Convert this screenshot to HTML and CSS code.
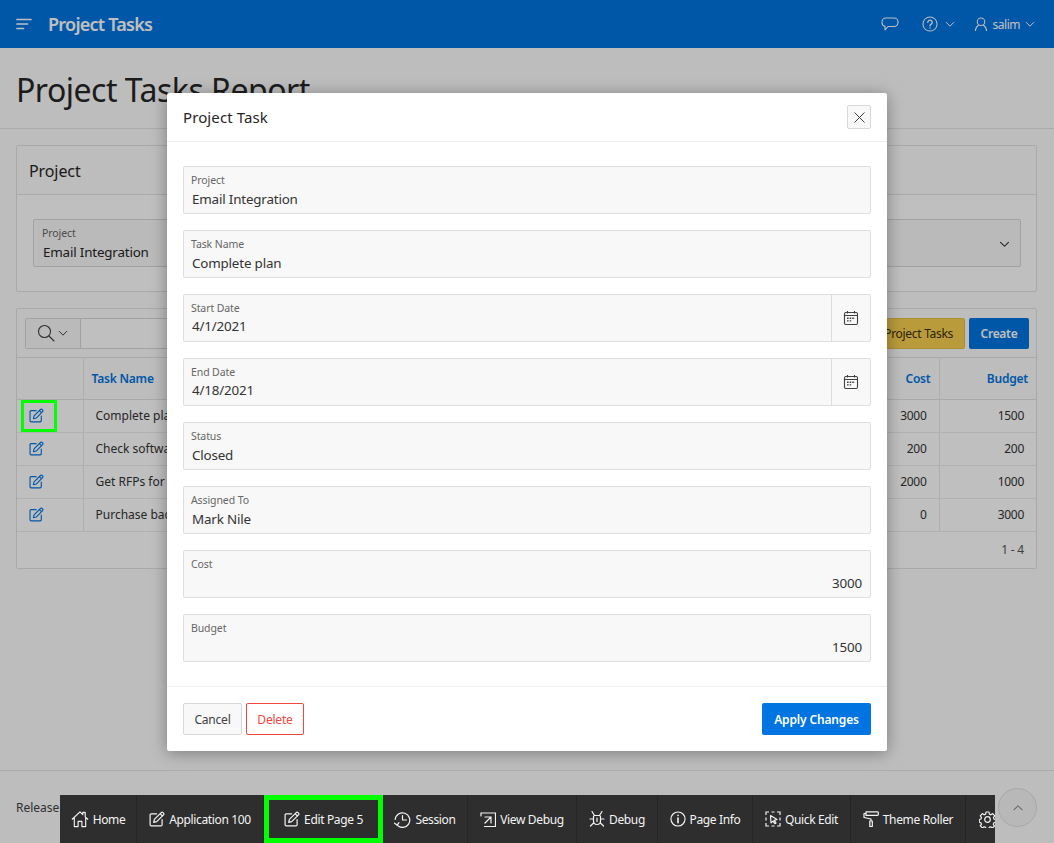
FILE: index.html
```html
<!DOCTYPE html>
<html lang="en">
<head>
  <meta charset="UTF-8" />
  <meta name="viewport" content="width=device-width, initial-scale=1.0" />
  <title>Project Tasks</title>
  <link rel="stylesheet" href="styles.css">
</head>
<body>
  <svg class="sprites" width="0" height="0" aria-hidden="true">
    <symbol id="i-edit" viewBox="0 0 16 16" fill="none" stroke="currentColor" stroke-width="1.2" stroke-linejoin="round" stroke-linecap="round">
      <path d="M7.6 2.8H2.2a1.1 1.1 0 0 0-1.1 1.1v9.8a1.1 1.1 0 0 0 1.1 1.1H12a1.1 1.1 0 0 0 1.1-1.1V8.6"/>
      <path d="M5.4 8.4 12.2 1.6a1.3 1.3 0 0 1 1.8 0l.5.5a1.3 1.3 0 0 1 0 1.8L7.7 10.7l-3 .7zM11.1 2.7l2.3 2.3"/>
    </symbol>
    <symbol id="i-cal" viewBox="0 0 16 16" fill="none" stroke="currentColor" stroke-width="1.1">
      <rect x="1.5" y="2.5" width="13" height="12" rx="1.4"/>
      <path d="M1.5 5.5h13M4.5 1v2.6M11.5 1v2.6"/>
      <path stroke-width="1.4" stroke-dasharray="1.6 1" d="M4 8.2h8M4 10.9h5.2"/>
    </symbol>
    <symbol id="i-chev" viewBox="0 0 12 8" fill="none" stroke="currentColor" stroke-width="1.2" stroke-linecap="round" stroke-linejoin="round">
      <path d="M1.5 1.5 6 6l4.500-4.500"/>
    </symbol>
  </svg>

  <div class="page">
    <header class="topbar">
      <svg class="menu-icon" width="16" height="12" viewBox="0 0 16 12" fill="none" stroke="currentColor" stroke-width="1.7" stroke-linecap="round">
        <path d="M1 1.500h14M1 6h10.500M1 10.500h6.500"/>
      </svg>
      <span class="app-name">Project Tasks</span>
      <div class="topbar-right">
        <svg class="chat-icon" width="18" height="16" viewBox="0 0 18 16" fill="none" stroke="currentColor" stroke-width="1.1" stroke-linejoin="round">
          <path d="M5 1h8a4 4 0 0 1 4 4v.5a4 4 0 0 1-4 4H7l-3 3.500v-3.600A4 4 0 0 1 1 5.500V5a4 4 0 0 1 4-4z"/>
        </svg>
        <span class="help">
          <svg width="16" height="16" viewBox="0 0 17 17" fill="none" stroke="currentColor" stroke-width="1.1" stroke-linecap="round">
            <circle cx="8.500" cy="8.500" r="7.500"/>
            <path stroke-width="1.400" d="M6.200 6.700a2.300 2.300 0 1 1 3.600 1.900c-.8.500-1.300 1-1.300 1.900"/>
            <path stroke-width="1.500" d="M8.500 12.700v.1"/>
          </svg>
          <svg class="chev" width="10" height="7"><use href="#i-chev"/></svg>
        </span>
        <span class="user">
          <svg width="14" height="15" viewBox="0 0 14 16" fill="none" stroke="currentColor" stroke-width="1.1">
            <circle cx="7" cy="5" r="4"/>
            <path d="M1 15c0-3 1.500-5 3.500-6.500M13 15c0-3-1.500-5-3.500-6.500"/>
          </svg>
          <span>salim</span>
          <svg class="chev" width="10" height="7"><use href="#i-chev"/></svg>
        </span>
      </div>
    </header>

    <div class="hero">
      <h1>Project Tasks Report</h1>
    </div>

    <main class="content">
      <section class="card">
        <div class="card-head">Project</div>
        <div class="card-body">
          <div class="select-field">
            <div>
              <div class="select-label">Project</div>
              <div class="select-value">Email Integration</div>
            </div>
            <svg class="select-chev" width="11" height="7"><use href="#i-chev"/></svg>
          </div>
        </div>
      </section>

      <section class="card report">
        <div class="report-bar">
          <div class="search">
            <span class="search-btn">
              <svg width="18" height="18" viewBox="0 0 18 18" fill="none" stroke="currentColor" stroke-width="1.100" stroke-linecap="round">
                <circle cx="7.500" cy="7.500" r="6"/>
                <path d="m12 12 5 5"/>
              </svg>
              <svg class="chev" width="10" height="7"><use href="#i-chev"/></svg>
            </span>
          </div>
          <span class="btn-yellow">Add Project Tasks</span>
          <span class="btn-blue">Create</span>
        </div>
        <table class="tasks">
          <thead>
            <tr>
              <th class="col-link"></th>
              <th class="col-name">Task Name</th>
              <th class="num col-cost">Cost</th>
              <th class="num col-budget">Budget</th>
            </tr>
          </thead>
          <tbody>
            <tr>
              <td class="link-cell"><svg class="edit-link" width="15" height="15"><use href="#i-edit"/></svg></td>
              <td>Complete plan</td><td class="num">3000</td><td class="num">1500</td>
            </tr>
            <tr>
              <td class="link-cell"><svg class="edit-link" width="15" height="15"><use href="#i-edit"/></svg></td>
              <td>Check software</td><td class="num">200</td><td class="num">200</td>
            </tr>
            <tr>
              <td class="link-cell"><svg class="edit-link" width="15" height="15"><use href="#i-edit"/></svg></td>
              <td>Get RFPs for new</td><td class="num">2000</td><td class="num">1000</td>
            </tr>
            <tr>
              <td class="link-cell"><svg class="edit-link" width="15" height="15"><use href="#i-edit"/></svg></td>
              <td>Purchase backup</td><td class="num">0</td><td class="num">3000</td>
            </tr>
          </tbody>
        </table>
        <div class="pager">1 - 4</div>
      </section>
    </main>

    <footer class="foot">Release 1.0</footer>
  </div>

  <button class="to-top" aria-label="Top">
    <svg width="12" height="7"><use href="#i-chev" transform="rotate(180 6 3.500)"/></svg>
  </button>

  <div class="overlay"></div>
  <div class="hl"></div>

  <div class="dialog">
    <div class="dialog-head">
      <span>Project Task</span>
      <span class="close">
        <svg width="11" height="11" viewBox="0 0 11 11" stroke="currentColor" stroke-width="1"><path d="m.5.500 10 10M10.500.500l-10 10"/></svg>
      </span>
    </div>
    <div class="dialog-body">
      <div class="field"><label>Project</label><div class="val">Email Integration</div></div>
      <div class="field"><label>Task Name</label><div class="val">Complete plan</div></div>
      <div class="field has-cal">
        <div class="field-main"><label>Start Date</label><div class="val">4/1/2021</div></div>
        <span class="cal"><svg width="16" height="16"><use href="#i-cal"/></svg></span>
      </div>
      <div class="field has-cal">
        <div class="field-main"><label>End Date</label><div class="val">4/18/2021</div></div>
        <span class="cal"><svg width="16" height="16"><use href="#i-cal"/></svg></span>
      </div>
      <div class="field"><label>Status</label><div class="val">Closed</div></div>
      <div class="field"><label>Assigned To</label><div class="val">Mark Nile</div></div>
      <div class="field"><label>Cost</label><div class="val right">3000</div></div>
      <div class="field"><label>Budget</label><div class="val right">1500</div></div>
    </div>
    <div class="dialog-foot">
      <span class="btn btn-cancel">Cancel</span>
      <span class="btn btn-delete">Delete</span>
      <span class="btn btn-apply">Apply Changes</span>
    </div>
  </div>

  <nav class="devbar">
    <a class="w-home">
      <svg width="18" height="18" viewBox="0 0 19 18" fill="none" stroke="currentColor" stroke-width="1.200" stroke-linejoin="round">
        <path d="M1 9.500 9.500 1.500l3 2.800V2h2.500v4.700l3 2.800M3.500 7.500V17h4v-5.500h4V17h4V7.500"/>
      </svg>
      Home
    </a>
    <a class="w-app"><svg width="16" height="16"><use href="#i-edit"/></svg>Application 100</a>
    <a class="w-edit"><svg width="16" height="16"><use href="#i-edit"/></svg>Edit Page 5</a>
    <a class="w-session">
      <svg width="17" height="17" viewBox="0 0 17 17" fill="none" stroke="currentColor" stroke-width="1.200" stroke-linecap="round" stroke-linejoin="round">
        <path d="M3.200 14.200A7.300 7.300 0 1 0 1.200 8.500M8.500 4.500v4.500H12.500M.6 12.200l2.600 2 1.700-2.500"/>
      </svg>
      Session
    </a>
    <a class="w-view">
      <svg width="16" height="15" viewBox="0 0 16 15" fill="none" stroke="currentColor" stroke-width="1.200" stroke-linecap="round">
        <path d="M1 4V1h14.500v13.500H4.500M5 5h6v6M11 5l-6 6"/>
      </svg>
      View Debug
    </a>
    <a class="w-debug">
      <svg width="16" height="16" viewBox="0 0 16 16" fill="none" stroke="currentColor" stroke-width="1.200" stroke-linecap="round">
        <path d="M5.500 4.500h5a1 1 0 0 1 1 1V10a3.500 3.500 0 0 1-7 0V5.500a1 1 0 0 1 1-1zM3 .5l2.500 4M13 .5l-2.500 4M1 8h3.500M11.500 8H15M1.500 15l3-3M14.500 15l-3-3M8 7v3.500"/>
      </svg>
      Debug
    </a>
    <a class="w-info">
      <svg width="16" height="16" viewBox="0 0 17 17" fill="none" stroke="currentColor" stroke-width="1.200" stroke-linecap="round">
        <circle cx="8.500" cy="8.500" r="7.500"/>
        <path stroke-width="1.700" d="M8.500 7.500V12.500M8.500 4.700v.1"/>
      </svg>
      Page Info
    </a>
    <a class="w-quick">
      <svg width="16" height="16" viewBox="0 0 16 16" fill="none" stroke="currentColor" stroke-width="1.200">
        <path d="M1 4V1h3M6.500 1h3M12 1h3v3M15 6.500v3M15 12v3h-3M9.500 15h-3M4 15H1v-3M1 9.500v-3"/>
        <path stroke-linejoin="round" d="M5.500 4.500 12 8.500l-2.800.8 1.800 2.600-1.200.8-1.800-2.600-2 1.800z"/>
      </svg>
      Quick Edit
    </a>
    <a class="w-theme">
      <svg width="16" height="16" viewBox="0 0 16 16" fill="none" stroke="currentColor" stroke-width="1.200" stroke-linejoin="round">
        <path d="M3 .8h11.500a.8.800 0 0 1 .8.800v2a.8.800 0 0 1-.8.800H3zM3 2.500H1v4l7 1.500v2M6.800 10h2.500v5.500H6.800z"/>
      </svg>
      Theme Roller
    </a>
    <a class="w-gear">
      <svg width="17" height="17" viewBox="0 0 17 17" fill="none" stroke="currentColor" stroke-width="1.200" stroke-linejoin="round">
        <circle cx="8.500" cy="8.500" r="2.800"/>
        <path d="M7 1h3l.4 2.100 1.500.7L13.700 2.600l2 2.200-1.300 1.700.5 1.500 1.600.5v2.800l-1.600.5-.6 1.500 1.200 1.700-2.100 2-1.700-1.200-1.500.6-.4 1.500H7l-.4-1.600-1.500-.6-1.700 1.200-2.100-2 1.200-1.700-.6-1.500-1.600-.5V8.500l1.600-.5.600-1.500L1.300 4.800l2-2.200 1.800 1.200 1.500-.7z"/>
      </svg>
    </a>
  </nav>
</body>
</html>
```

FILE: styles.css
```css
* { box-sizing: border-box; }
html, body { height: 100%; }
body {
  margin: 0;
  overflow: hidden;
  font-family: "Noto Sans", "Open Sans", sans-serif;
  font-size: 13px;
  color: #262626;
  background-color: #fcfcfc;
}
.sprites { position: absolute; }
.page {
  height: 843px;
  display: flex;
  flex-direction: column;
}

/* top bar */
.topbar {
  height: 48px;
  flex: none;
  display: flex;
  align-items: center;
  padding: 0 19px 0 16px;
  background-color: #0074e0;
  color: #fff;
}
.app-name {
  margin-left: 16px;
  font-size: 18px;
  font-weight: 600;
  letter-spacing: -0.75px;
}
.topbar-right {
  margin-left: auto;
  display: flex;
  align-items: center;
  font-size: 12px;
}
.chat-icon { margin: 2px 23px 0 0; }
.help, .user { display: flex; align-items: center; }
.help { margin-right: 19px; }
.help .chev { margin-left: 7px; }
.user span { margin: 0 5px; letter-spacing: -0.5px; }

/* page title */
.hero {
  height: 81px;
  flex: none;
  padding: 0 16px;
  display: flex;
  align-items: center;
  border-bottom: 1px solid #e4e4e4;
}
h1 {
  margin: 3px 0 0;
  font-size: 32px;
  font-weight: 400;
  letter-spacing: -0.5px;
}

/* regions */
.content {
  flex: 1;
  padding: 16px 17px 0 16px;
  display: flex;
  flex-direction: column;
  gap: 16px;
}
.card {
  border: 1px solid #e2e2e2;
  border-radius: 2px;
  background-color: #fff;
}
.card-head {
  height: 49px;
  display: flex;
  align-items: center;
  padding: 1px 12px 0;
  font-size: 16px;
  letter-spacing: -0.1px;
  border-bottom: 1px solid #e2e2e2;
  background-color: #fcfcfc;
}
.card-body { padding: 24px 15px 24px 16px; }
.select-field {
  height: 48px;
  display: flex;
  align-items: center;
  justify-content: space-between;
  padding: 2px 10px 0 9px;
  border: 1px solid #d8d8d8;
  border-radius: 2px;
  background-color: #f8f8f8;
}
.select-label {
  margin-left: -1px;
  font-size: 10.5px;
  letter-spacing: -0.1px;
  color: #666;
  line-height: 14px;
}
.select-value {
  margin-top: 2px;
  font-size: 13.4px;
  letter-spacing: -0.18px;
  line-height: 20px;
}

/* report */
.report-bar {
  height: 49px;
  display: flex;
  align-items: center;
  gap: 4px;
  padding: 0 7px 0 8px;
  background-color: #fcfcfc;
  border-bottom: 1px solid #e2e2e2;
}
.search {
  flex: 1;
  height: 31px;
  border: 1px solid #d8d8d8;
  border-radius: 2px;
  background-color: #fff;
}
.search-btn {
  width: 55px;
  height: 100%;
  display: flex;
  align-items: center;
  gap: 3px;
  padding-left: 11px;
  border-right: 1px solid #d8d8d8;
  background-color: #f8f8f8;
  color: #404040;
}
.btn-yellow, .btn-blue {
  height: 31px;
  display: flex;
  align-items: center;
  padding: 0 11px;
  border-radius: 2px;
  font-size: 12px;
  letter-spacing: -0.3px;
}
.btn-yellow {
  background-color: #f8cf50;
  border: 1px solid #e6be45;
  color: #3a3000;
}
.btn-blue {
  width: 60px;
  justify-content: center;
  background-color: #0074e0;
  color: #fff;
  font-weight: 600;
}
.tasks {
  width: 100%;
  border-collapse: collapse;
  table-layout: fixed;
  font-size: 12px;
}
.tasks th {
  height: 41px;
  padding: 0 8px;
  text-align: left;
  color: #0074e0;
  font-weight: 600;
  letter-spacing: -0.2px;
  border-bottom: 1px solid #e2e2e2;
  background-color: #fcfcfc;
}
.tasks td {
  height: 33px;
  padding: 0 12px;
  border-bottom: 1px solid #ececec;
  color: #333;
}
.tasks th + th, .tasks td + td { border-left: 1px solid #e8e8e8; }
.tasks .num { text-align: right; padding-right: 8px; }
.tasks td.num { padding-right: 12px; letter-spacing: -0.3px; }
.col-link { width: 66px; }
.col-cost { width: 100px; }
.col-budget { width: 97px; }
.tasks .link-cell { padding: 0 0 0 12px; color: #0074e0; }
.edit-link { display: block; margin-top: -1px; }
.pager {
  height: 36px;
  display: flex;
  align-items: center;
  justify-content: flex-end;
  padding-right: 12px;
  font-size: 12px;
  letter-spacing: -0.2px;
  color: #555;
}

.foot {
  height: 73px;
  flex: none;
  padding: 28px 16px 0;
  font-size: 12px;
  color: #404040;
  border-top: 1px solid #e4e4e4;
}
.to-top {
  position: absolute;
  left: 998px;
  top: 788px;
  width: 39px;
  height: 39px;
  display: flex;
  align-items: center;
  justify-content: center;
  padding: 0;
  border: 1px solid #e0e0e0;
  border-radius: 50%;
  background-color: #f6f6f6;
  color: #888;
}

/* modal */
.overlay {
  position: absolute;
  inset: 0;
  background-color: rgba(0, 0, 0, 0.25);
}
.hl {
  position: absolute;
  left: 21px;
  top: 400px;
  width: 36px;
  height: 32px;
  border: 3px solid #00ff00;
}
.dialog {
  position: absolute;
  left: 167px;
  top: 93px;
  width: 720px;
  height: 658px;
  display: flex;
  flex-direction: column;
  background-color: #fff;
  border-radius: 2px;
  box-shadow: 0 2px 16px rgba(0, 0, 0, 0.35);
}
.dialog-head {
  height: 49px;
  flex: none;
  display: flex;
  align-items: center;
  justify-content: space-between;
  padding: 0 16px;
  font-size: 15px;
  letter-spacing: 0.1px;
  border-bottom: 1px solid #ececec;
}
.close {
  width: 24px;
  height: 24px;
  display: flex;
  align-items: center;
  justify-content: center;
  background-color: #f8f8f8;
  border: 1px solid #d8d8d8;
  border-radius: 2px;
  color: #404040;
}
.dialog-body {
  flex: 1;
  padding: 24px 16px 0;
  display: flex;
  flex-direction: column;
  gap: 16px;
}
.field {
  height: 48px;
  padding: 6px 8px 0;
  background-color: #f8f8f8;
  border: 1px solid #dedede;
  border-radius: 2px;
}
.field label {
  display: block;
  margin-left: -1px;
  font-size: 10.5px;
  letter-spacing: -0.1px;
  line-height: 14px;
  color: #666;
}
.val {
  font-size: 13.4px;
  letter-spacing: -0.18px;
  line-height: 22px;
  margin-top: 1px;
  color: #333;
}
.val.right { text-align: right; }
.has-cal { display: flex; padding: 0; }
.has-cal .val { margin-top: 0; }
.field-main { flex: 1; padding: 6px 8px 0; }
.cal {
  width: 39px;
  display: flex;
  align-items: center;
  justify-content: center;
  border-left: 1px solid #dedede;
  color: #404040;
}
.dialog-foot {
  height: 65px;
  flex: none;
  display: flex;
  align-items: center;
  gap: 4px;
  padding: 0 16px;
  border-top: 1px solid #efefef;
}
.btn {
  height: 32px;
  display: flex;
  align-items: center;
  justify-content: center;
  border-radius: 2px;
  font-size: 12px;
  letter-spacing: -0.2px;
}
.btn-cancel {
  width: 59px;
  background-color: #f8f8f8;
  border: 1px solid #d8d8d8;
  color: #404040;
}
.btn-delete {
  width: 58px;
  border: 1px solid #f0483c;
  color: #f0483c;
}
.btn-apply {
  width: 109px;
  margin-left: auto;
  background-color: #0074e0;
  color: #fff;
  font-weight: 600;
  letter-spacing: -0.15px;
}

/* developer toolbar */
.devbar {
  position: absolute;
  left: 60px;
  bottom: 0;
  width: 935px;
  height: 48px;
  display: flex;
  overflow: hidden;
  background-color: #2e2e2e;
  color: #f4f4f4;
  font-size: 12px;
  letter-spacing: -0.35px;
}
.devbar a {
  flex: none;
  display: flex;
  align-items: center;
  justify-content: center;
  gap: 4px;
  border-right: 1px solid #262626;
}
.w-home { width: 77px; }
.w-app { width: 127px; }
.w-edit { width: 119px; border: 5px solid #00ff00 !important; }
.w-session { width: 85px; }
.w-view { width: 109px; }
.w-debug { width: 81px; }
.w-info { width: 95px; }
.w-quick { width: 98px; }
.w-theme { width: 115px; }
.devbar .w-gear { width: 42px; justify-content: flex-start; padding-left: 13px; border: 0; }
```
